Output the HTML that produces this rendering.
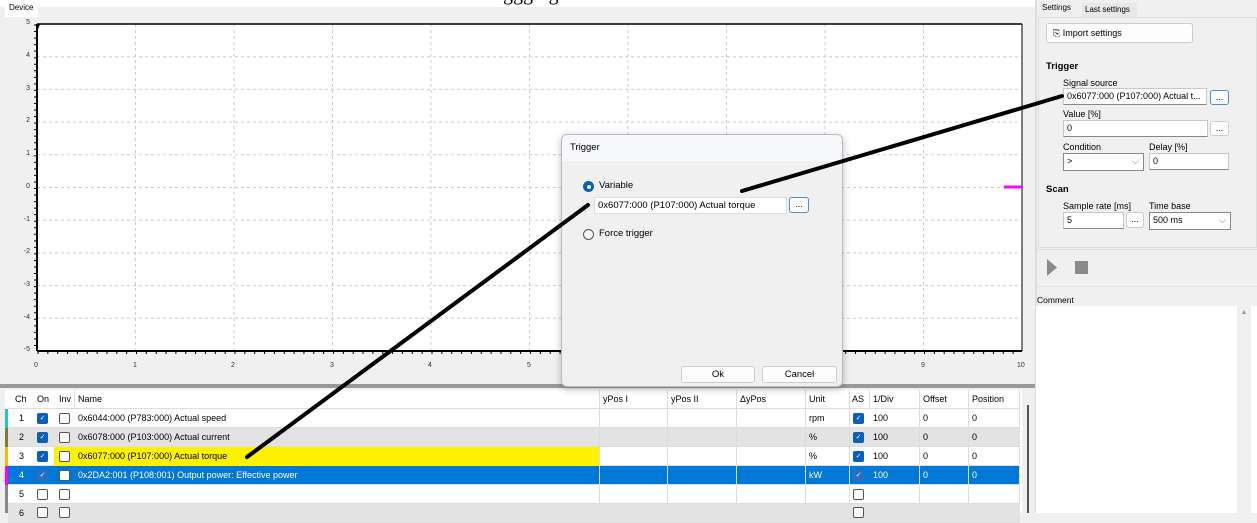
<!DOCTYPE html>
<html><head><meta charset="utf-8"><style>
*{box-sizing:border-box;margin:0;padding:0}
body{width:1257px;height:513px;overflow:hidden;background:#f0f0f0;font-family:"Liberation Sans",sans-serif;font-size:9px;color:#000;position:relative}
.a{position:absolute}
.inp{position:absolute;background:#fff;border:1px solid #c8c8c8;border-bottom:1px solid #888;padding:2px 3px;font-size:9px;white-space:nowrap;overflow:hidden}
.btn{position:absolute;background:#fdfdfd;border:1px solid #ccc;border-radius:3px;font-size:9px;text-align:center}
.cb{position:absolute;width:11px;height:11px;border:1px solid #555;border-radius:2px;background:#fff}
.cbc{position:absolute;width:11px;height:11px;border-radius:2px;background:#0a5fb8;color:#fff;font-size:7px;line-height:11px;text-align:center}
.row{position:absolute;left:8px;width:1012px;height:19px;border-bottom:1px solid #ddd}
.c{position:absolute;top:0;height:19px;line-height:19px;border-right:1px solid #ddd;white-space:nowrap;overflow:hidden;padding-left:3px}
.yl{position:absolute;left:14px;width:16px;text-align:right;font-size:7px;color:#333}
.xl{position:absolute;top:362px;font-size:7px;color:#333}
</style></head><body>
<div class="a" style="left:0;top:0;width:1035px;height:7px;background:#fff;overflow:hidden"><div class="a" style="left:503px;top:-17px;font-family:'Liberation Serif',serif;font-size:20px;white-space:nowrap">ggging</div></div>
<div class="a" style="left:5px;top:2px;width:33px;height:15px;background:#fff;font-size:8px;padding-left:4px;line-height:12px">Device</div>
<!-- plot -->
<svg class="a" style="left:0;top:17px" width="1035" height="370">
<rect x="37" y="7" width="985" height="327" fill="#fff"/>
<g stroke="#ccc" stroke-dasharray="3,3" stroke-width="1">
<line x1="135.5" y1="7" x2="135.5" y2="334"/><line x1="234" y1="7" x2="234" y2="334"/><line x1="332.5" y1="7" x2="332.5" y2="334"/><line x1="431" y1="7" x2="431" y2="334"/><line x1="529.5" y1="7" x2="529.5" y2="334"/><line x1="628" y1="7" x2="628" y2="334"/><line x1="726.5" y1="7" x2="726.5" y2="334"/><line x1="825" y1="7" x2="825" y2="334"/><line x1="923.5" y1="7" x2="923.5" y2="334"/>
<line x1="37" y1="39.7" x2="1022" y2="39.7"/><line x1="37" y1="72.4" x2="1022" y2="72.4"/><line x1="37" y1="105.1" x2="1022" y2="105.1"/><line x1="37" y1="137.8" x2="1022" y2="137.8"/><line x1="37" y1="170.5" x2="1022" y2="170.5"/><line x1="37" y1="203.2" x2="1022" y2="203.2"/><line x1="37" y1="235.9" x2="1022" y2="235.9"/><line x1="37" y1="268.6" x2="1022" y2="268.6"/><line x1="37" y1="301.3" x2="1022" y2="301.3"/>
</g>
<line x1="37" y1="7" x2="1022" y2="7" stroke="#000" stroke-width="1.5"/>
<line x1="37" y1="334" x2="1022" y2="334" stroke="#000" stroke-width="2"/>
<line x1="37" y1="7" x2="37" y2="334" stroke="#000" stroke-width="2"/>
<line x1="1022" y1="7" x2="1022" y2="334" stroke="#000" stroke-width="1"/>
<line x1="37.5" y1="335.5" x2="1022" y2="335.5" stroke="#000" stroke-width="3" stroke-dasharray="1,8.85"/>
<line x1="35" y1="7.5" x2="35" y2="334" stroke="#000" stroke-width="2" stroke-dasharray="1,5.54"/>
<line x1="37" y1="12" x2="39" y2="7" stroke="#000" stroke-width="2"/>
<rect x="1004" y="168.5" width="18" height="3" fill="#f0f"/>
</svg>
<div class="yl" style="top:19px">5</div><div class="yl" style="top:52px">4</div><div class="yl" style="top:85px">3</div><div class="yl" style="top:117px">2</div><div class="yl" style="top:150px">1</div><div class="yl" style="top:183px">0</div><div class="yl" style="top:216px">-1</div><div class="yl" style="top:248px">-2</div><div class="yl" style="top:281px">-3</div><div class="yl" style="top:314px">-4</div><div class="yl" style="top:346px">-5</div>
<div class="xl" style="left:34px">0</div><div class="xl" style="left:133px">1</div><div class="xl" style="left:231px">2</div><div class="xl" style="left:330px">3</div><div class="xl" style="left:428px">4</div><div class="xl" style="left:527px">5</div><div class="xl" style="left:921px">9</div><div class="xl" style="left:1017px">10</div>
<div class="a" style="left:0;top:384px;width:1035px;height:4px;background:#999"></div>
<!-- table -->
<div class="a" style="left:5px;top:390px;width:1017px;height:123px;background:#fff"></div>
<div class="row" style="top:390px;background:#fff">
<div class="c" style="left:0;width:25px;border:0;padding-left:7px">Ch</div><div class="c" style="left:25px;width:21px;border:0;padding-left:4px">On</div><div class="c" style="left:46px;width:21px;padding-left:5px">Inv</div><div class="c" style="left:67px;width:525px">Name</div><div class="c" style="left:592px;width:68px">yPos I</div><div class="c" style="left:660px;width:69px">yPos II</div><div class="c" style="left:729px;width:69px">ΔyPos</div><div class="c" style="left:798px;width:44px">Unit</div><div class="c" style="left:842px;width:20px;padding-left:2px">AS</div><div class="c" style="left:862px;width:50px">1/Div</div><div class="c" style="left:912px;width:49px">Offset</div><div class="c" style="left:961px;width:51px">Position</div>
</div>
<div class="row" style="top:409px;background:#fff"><div class="c" style="left:67px;width:525px">0x6044:000 (P783:000) Actual speed</div><div class="c" style="left:592px;width:68px"></div><div class="c" style="left:660px;width:69px"></div><div class="c" style="left:729px;width:69px"></div><div class="c" style="left:798px;width:44px">rpm</div><div class="c" style="left:862px;width:50px">100</div><div class="c" style="left:912px;width:49px">0</div><div class="c" style="left:961px;width:51px">0</div></div>
<div class="row" style="top:428px;background:#e3e3e3"><div class="c" style="left:67px;width:525px">0x6078:000 (P103:000) Actual current</div><div class="c" style="left:592px;width:68px"></div><div class="c" style="left:660px;width:69px"></div><div class="c" style="left:729px;width:69px"></div><div class="c" style="left:798px;width:44px">%</div><div class="c" style="left:862px;width:50px">100</div><div class="c" style="left:912px;width:49px">0</div><div class="c" style="left:961px;width:51px">0</div></div>
<div class="row" style="top:447px;background:#fff"><div class="c" style="left:46px;width:546px;background:#fff200;border:0"></div><div class="c" style="left:67px;width:525px;background:#fff200">0x6077:000 (P107:000) Actual torque</div><div class="c" style="left:592px;width:68px"></div><div class="c" style="left:660px;width:69px"></div><div class="c" style="left:729px;width:69px"></div><div class="c" style="left:798px;width:44px">%</div><div class="c" style="left:862px;width:50px">100</div><div class="c" style="left:912px;width:49px">0</div><div class="c" style="left:961px;width:51px">0</div></div>
<div class="row" style="top:466px;background:#0078d7;color:#fff"><div class="c" style="left:67px;width:525px">0x2DA2:001 (P108:001) Output power: Effective power</div><div class="c" style="left:592px;width:68px"></div><div class="c" style="left:660px;width:69px"></div><div class="c" style="left:729px;width:69px"></div><div class="c" style="left:798px;width:44px">kW</div><div class="c" style="left:862px;width:50px">100</div><div class="c" style="left:912px;width:49px">0</div><div class="c" style="left:961px;width:51px">0</div></div>
<div class="row" style="top:485px;background:#fff"><div class="c" style="left:67px;width:525px"></div><div class="c" style="left:592px;width:68px"></div><div class="c" style="left:660px;width:69px"></div><div class="c" style="left:729px;width:69px"></div><div class="c" style="left:798px;width:44px"></div><div class="c" style="left:862px;width:50px"></div><div class="c" style="left:912px;width:49px"></div><div class="c" style="left:961px;width:51px"></div></div>
<div class="row" style="top:504px;background:#e3e3e3"></div>
<div class="a" style="left:5px;top:409px;width:3px;height:19px;background:#1ac8c8"></div>
<div class="a" style="left:5px;top:428px;width:3px;height:19px;background:#7f7a3a"></div>
<div class="a" style="left:5px;top:447px;width:3px;height:19px;background:#f2c200"></div>
<div class="a" style="left:5px;top:466px;width:3px;height:19px;background:#f0f"></div>
<div class="a" style="left:5px;top:485px;width:3px;height:28px;background:#888"></div>
<div class="a" style="left:19px;top:413px">1</div><div class="a" style="left:19px;top:432px">2</div><div class="a" style="left:19px;top:451px">3</div><div class="a" style="left:19px;top:470px;color:#fff">4</div><div class="a" style="left:19px;top:489px">5</div><div class="a" style="left:19px;top:508px">6</div>
<div class="cbc" style="left:37px;top:413px">✓</div><div class="cbc" style="left:37px;top:432px">✓</div><div class="cbc" style="left:37px;top:451px">✓</div><div class="cbc" style="left:37px;top:470px;background:#2a6fc0">✓</div><div class="cb" style="left:37px;top:489px"></div><div class="cb" style="left:37px;top:507px"></div>
<div class="cb" style="left:59px;top:413px"></div><div class="cb" style="left:59px;top:432px"></div><div class="cb" style="left:59px;top:451px"></div><div class="cb" style="left:59px;top:470px"></div><div class="cb" style="left:59px;top:489px"></div><div class="cb" style="left:59px;top:507px"></div>
<div class="cbc" style="left:853px;top:413px">✓</div><div class="cbc" style="left:853px;top:432px">✓</div><div class="cbc" style="left:853px;top:451px">✓</div><div class="cbc" style="left:853px;top:470px;background:#2a6fc0">✓</div><div class="cb" style="left:853px;top:489px"></div><div class="cb" style="left:853px;top:507px"></div>
<div class="a" style="left:1022px;top:390px;width:13px;height:123px;background:#f0f0f0"></div>
<div class="a" style="left:1027px;top:405px;width:2px;height:108px;background:#555"></div>
<!-- right panel -->
<div class="a" style="left:1035px;top:0;width:2px;height:513px;background:#ddd"></div>
<div class="a" style="left:1040px;top:0;width:40px;height:17px;background:#f0f0f0;font-size:8px;padding:3px 2px">Settings</div>
<div class="a" style="left:1082px;top:3px;width:55px;height:14px;background:#e8e8e8;font-size:8px;padding:2px 3px">Last settings</div>
<div class="a" style="left:1038px;top:17px;width:219px;height:231px;border:1px solid #ddd"></div>
<div class="btn" style="left:1046px;top:23px;width:147px;height:20px;line-height:18px;text-align:left;padding-left:6px">⎘ Import settings</div>
<div class="a" style="left:1046px;top:61px;font-weight:bold;font-size:9.5px">Trigger</div>
<div class="a" style="left:1063px;top:78px">Signal source</div>
<div class="inp" style="left:1063px;top:88px;width:144px;height:17px">0x6077:000 (P107:000) Actual t...</div>
<div class="btn" style="left:1210px;top:90px;width:19px;height:15px;border-color:#4a8fd8;line-height:12px">...</div>
<div class="a" style="left:1063px;top:109px">Value [%]</div>
<div class="inp" style="left:1063px;top:120px;width:145px;height:17px">0</div>
<div class="btn" style="left:1210px;top:121px;width:19px;height:15px;line-height:12px">...</div>
<div class="a" style="left:1063px;top:142px">Condition</div>
<div class="a" style="left:1149px;top:142px">Delay [%]</div>
<div class="inp" style="left:1063px;top:153px;width:81px;height:18px;border-color:#888">&gt;<span style="position:absolute;right:4px;top:2px;color:#666">⌵</span></div>
<div class="inp" style="left:1149px;top:153px;width:80px;height:17px">0</div>
<div class="a" style="left:1046px;top:184px;font-weight:bold;font-size:9.5px">Scan</div>
<div class="a" style="left:1063px;top:201px">Sample rate [ms]</div>
<div class="a" style="left:1149px;top:201px">Time base</div>
<div class="inp" style="left:1063px;top:212px;width:61px;height:17px">5</div>
<div class="btn" style="left:1126px;top:212px;width:18px;height:16px;line-height:12px">...</div>
<div class="inp" style="left:1149px;top:212px;width:82px;height:18px;border-color:#888">500 ms<span style="position:absolute;right:4px;top:2px;color:#666">⌵</span></div>
<div class="a" style="left:1037px;top:249px;width:220px;height:1px;background:#ddd"></div>
<svg class="a" style="left:1045px;top:258px" width="50" height="20"><polygon points="2,1 12,9.5 2,18" fill="#8a8a8a"/><rect x="30" y="3" width="13" height="13" fill="#8a8a8a"/></svg>
<div class="a" style="left:1037px;top:286px;width:220px;height:1px;background:#e4e4e4"></div>
<div class="a" style="left:1037px;top:295px;font-size:8.5px">Comment</div>
<div class="a" style="left:1036px;top:306px;width:221px;height:207px;background:#fff"></div>
<div class="a" style="left:1237px;top:306px;width:14px;height:207px;background:#f0f0f0;color:#999;font-size:7px;text-align:center;padding-top:3px">▲</div>
<!-- dialog -->
<div class="a" style="left:561px;top:134px;width:282px;height:253px;background:#f0f0f0;border:1px solid #bbb;border-radius:6px;box-shadow:0 2px 8px rgba(0,0,0,.25);overflow:hidden">
<div style="height:26px;background:#f7f8fb;padding:7px 8px;font-size:9.5px">Trigger</div>
</div>
<div class="a" style="left:583px;top:181px;width:11px;height:11px;border-radius:50%;background:#0a5fb8"></div>
<div class="a" style="left:586.5px;top:184.5px;width:4px;height:4px;border-radius:50%;background:#fff"></div>
<div class="a" style="left:599px;top:180px;font-size:9.5px">Variable</div>
<div class="inp" style="left:594px;top:197px;width:193px;height:17px;font-size:9.5px;border:1px solid #ddd">0x6077:000 (P107:000) Actual torque</div>
<div class="btn" style="left:789px;top:197px;width:20px;height:16px;border-color:#4a8fd8;line-height:12px">...</div>
<div class="a" style="left:583px;top:229px;width:11px;height:11px;border-radius:50%;border:1px solid #555;background:#f7f7f7"></div>
<div class="a" style="left:599px;top:228px;font-size:9.5px">Force trigger</div>
<div class="btn" style="left:681px;top:366px;width:74px;height:17px;line-height:15px;font-size:9.5px">Ok</div>
<div class="btn" style="left:762px;top:366px;width:75px;height:17px;line-height:15px;font-size:9.5px">Cancel</div>
<!-- annotation lines -->
<svg class="a" style="left:0;top:0" width="1257" height="513"><g stroke="#000" stroke-width="4" stroke-linecap="round"><line x1="1062" y1="96" x2="742" y2="191"/><line x1="588" y1="205" x2="247" y2="457"/></g></svg>
</body></html>
